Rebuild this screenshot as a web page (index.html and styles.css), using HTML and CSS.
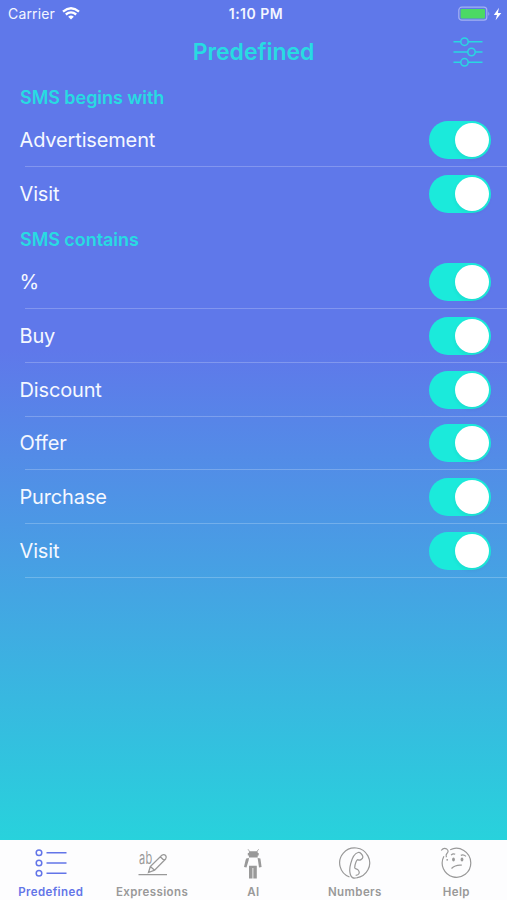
FILE: index.html
```html
<!DOCTYPE html>
<html lang="en">
<head>
<meta charset="utf-8">
<title>Predefined</title>
<link rel="stylesheet" href="styles.css">
</head>
<body>
<div class="app">
  <header class="status">
    <div class="carrier"><span>Carrier</span>
      <svg width="18" height="13" viewBox="0 0 18 13" fill="none" stroke="#fff" stroke-width="2.3"><path d="M1 4.6Q9-2.2 17 4.6M3.8 7.5Q9 3.2 14.2 7.5"/><path d="M6.2 9.7Q9 7.4 11.8 9.7L9 12.5Z" fill="#fff" stroke="none"/></svg>
    </div>
    <span class="time">1:10 PM</span>
    <div class="power">
      <svg width="44" height="16" viewBox="0 0 44 16"><rect x=".8" y="1.2" width="28" height="13" rx="3" fill="none" stroke="#a4b1f2" stroke-width="1.2"/><rect x="2.6" y="3" width="24.4" height="9.4" rx="1" fill="#4cd964"/><path d="M30.4 5.5q1.8 2.2 0 4.5z" fill="#a4b1f2"/><path d="M41 1.8L35.8 9H39L37.6 14.2L43.3 7H39.9Z" fill="#fff"/></svg>
    </div>
  </header>
  <nav class="navbar">
    <h1>Predefined</h1>
    <svg class="filter" width="30" height="30" viewBox="0 0 30 30" fill="none" stroke="#28d8e1" stroke-width="1.5"><path d="M.5 4.7H7.8M15.2 4.7H29.5M.5 15H14.8M22.2 15H29.5M.5 25.3H7.8M15.2 25.3H29.5"/><circle cx="11.5" cy="4.7" r="3.7"/><circle cx="18.5" cy="15" r="3.7"/><circle cx="11.5" cy="25.3" r="3.7"/></svg>
  </nav>
  <main>
    <section>
      <h2>SMS begins with</h2>
      <div class="row"><span>Advertisement</span><i class="switch"></i></div>
      <div class="row plain"><span>Visit</span><i class="switch"></i></div>
    </section>
    <section>
      <h2>SMS contains</h2>
      <div class="row"><span>%</span><i class="switch"></i></div>
      <div class="row"><span>Buy</span><i class="switch"></i></div>
      <div class="row"><span>Discount</span><i class="switch"></i></div>
      <div class="row"><span>Offer</span><i class="switch"></i></div>
      <div class="row"><span>Purchase</span><i class="switch"></i></div>
      <div class="row"><span>Visit</span><i class="switch"></i></div>
    </section>
  </main>
  <footer class="tabs">
    <div class="tab active">
      <svg width="34" height="34" viewBox="0 0 34 34" fill="none" stroke="currentColor" stroke-width="1.5"><circle cx="5" cy="6.7" r="2.8"/><circle cx="5" cy="17" r="2.8"/><circle cx="5" cy="27.2" r="2.8"/><path d="M12.5 6.7H32.5M12.5 17H32.5M12.5 27.2H32.5"/></svg>
      <span>Predefined</span>
    </div>
    <div class="tab">
      <svg width="34" height="34" viewBox="0 0 34 34" fill="none" stroke="currentColor" stroke-width="1.3"><text class="ab" x="4" y="18" textLength="13.4" lengthAdjust="spacingAndGlyphs">ab</text><path d="M3.5 28.7H32M13.5 26.5L15.3 20.5L26.8 9.3Q29 7.8 30.6 9.5Q32 11.2 30.6 13L19.6 24.2ZM15.3 20.5L19.6 24.2M25.3 10.8L29.2 14.4"/></svg>
      <span>Expressions</span>
    </div>
    <div class="tab">
      <svg width="34" height="34" viewBox="0 0 34 34" fill="currentColor"><path d="M12.9 5.2H21.7V11.5H12.9ZM11.8 7H12.9V9.5H11.8ZM21.7 7H22.7V9.5H21.7ZM10.2 12.5L13 12L12.6 14.5L10.5 21.5L8 21L9.6 14ZM21.6 12L24.4 12.5L25.6 21L23 21.5L22 14.5ZM13 19.7H20.8V32.5H17.3V22H16.5V32.5H13Z"/><path d="M13.5 5.4L12 3.2M21 5.4L22.7 3.2" fill="none" stroke="currentColor" stroke-width=".8"/></svg>
      <span>AI</span>
    </div>
    <div class="tab">
      <svg width="34" height="34" viewBox="0 0 34 34" fill="none" stroke="currentColor" stroke-width="1.2"><path d="M18.5 31.8A15 15 0 1 0 11.5 31"/><path d="M18.5 31.8C12 34 10.6 25.5 12.7 17.6C14.2 11.6 15.9 7.6 20.1 6.5C22.1 6 24.8 8.7 24.9 11.1C24.9 13.1 21.4 14.9 20.2 13.8C18.7 12.8 16.7 18.5 16.7 21.8C16.8 23.6 19.2 22.2 20.6 24.5C22.1 26.8 20.9 29.2 17.7 29.3"/></svg>
      <span>Numbers</span>
    </div>
    <div class="tab">
      <svg width="34" height="34" viewBox="0 0 34 34" fill="none" stroke="currentColor" stroke-width="1.2"><path d="M11.2 3.8C20-.7 31.8 5.7 31.8 17A14.3 14.3 0 1 1 4.9 10.2"/><path d="M2.2 4.5Q4.8 1.2 7.8 3.1Q10.3 5.1 7.9 7.5Q6.6 8.8 7.4 11.2M12.1 9.1Q14 7.1 16.2 8.2M21.8 9.4Q24.4 8.1 27 10.4M12.5 22.5Q16.5 18.5 22.8 19.2"/><g fill="currentColor" stroke="none"><circle cx="8.2" cy="13.8" r=".9"/><ellipse cx="14.5" cy="13.4" rx="1.4" ry="2"/><ellipse cx="23" cy="13.4" rx="1.4" ry="2"/></g></svg>
      <span>Help</span>
    </div>
  </footer>
</div>
</body>
</html>
```
FILE: styles.css
```css
* { box-sizing: border-box; }
body { margin: 0; font-family: Inter, "Liberation Sans", sans-serif; color: #fff; }
.app {
  width: 507px; height: 900px; display: flex; flex-direction: column; overflow: hidden;
  background: linear-gradient(180deg, #5f78ea 0, #5f78ea 350px, #28d2dc 840px);
}
.status {
  height: 27px; padding: 0 5px 0 8px; display: grid; grid-template-columns: 1fr auto 1fr;
  align-items: center; font-size: 14px; color: #f4f6ff;
}
.carrier { display: flex; align-items: center; gap: 7px; letter-spacing: .15px; }
.carrier svg { display: block; }
.time { padding-left: 2px; font-weight: 600; font-size: 14px; letter-spacing: .5px; }
.power { display: flex; justify-content: flex-end; }
.navbar { height: 54px; display: grid; grid-template-columns: 1fr auto 1fr; align-items: center; padding: 0 24px; }
h1 { grid-column: 2; margin: 0; padding-bottom: 4px; font-size: 23px; line-height: 28px; font-weight: 600; letter-spacing: -.05px; color: #28dbe2; }
.filter { justify-self: end; margin-bottom: 4px; }
h2 { height: 32px; margin: 0; padding-left: 20px; font-size: 18px; line-height: 33px; font-weight: 600; color: #28dbe2; letter-spacing: -.05px; }
section + section h2 { height: 34.8px; line-height: 37px; }
.row {
  height: 53.75px; display: flex; align-items: center; justify-content: space-between;
  padding: 0 16px 0 19.5px; font-size: 20px; letter-spacing: -.15px; color: #f5f8ff;
  background: linear-gradient(rgba(255,255,255,.22), rgba(255,255,255,.22)) 25px 100% / 100% 1px no-repeat;
}
.plain { background: none; }
.switch { width: 62px; height: 38px; padding: 2px; border-radius: 19px; background: #1beadb; display: flex; justify-content: flex-end; }
.switch::after { content: ""; width: 34px; height: 34px; border-radius: 50%; background: #fff; box-shadow: 0 2px 4px rgba(0,0,0,.06); }
.tabs { margin-top: auto; height: 60px; background: #fdfdfe; display: grid; grid-template-columns: repeat(5, 1fr); }
.tab { display: flex; flex-direction: column; align-items: center; padding-top: 6px; color: #999; font-size: 11.5px; line-height: 14px; font-weight: 600; letter-spacing: .4px; }
.tab span { margin-top: 5px; }
.tab svg { display: block; }
.active { color: #6375e8; }
.ab { font: 17px Inter, sans-serif; fill: currentColor; stroke: none; }
```
